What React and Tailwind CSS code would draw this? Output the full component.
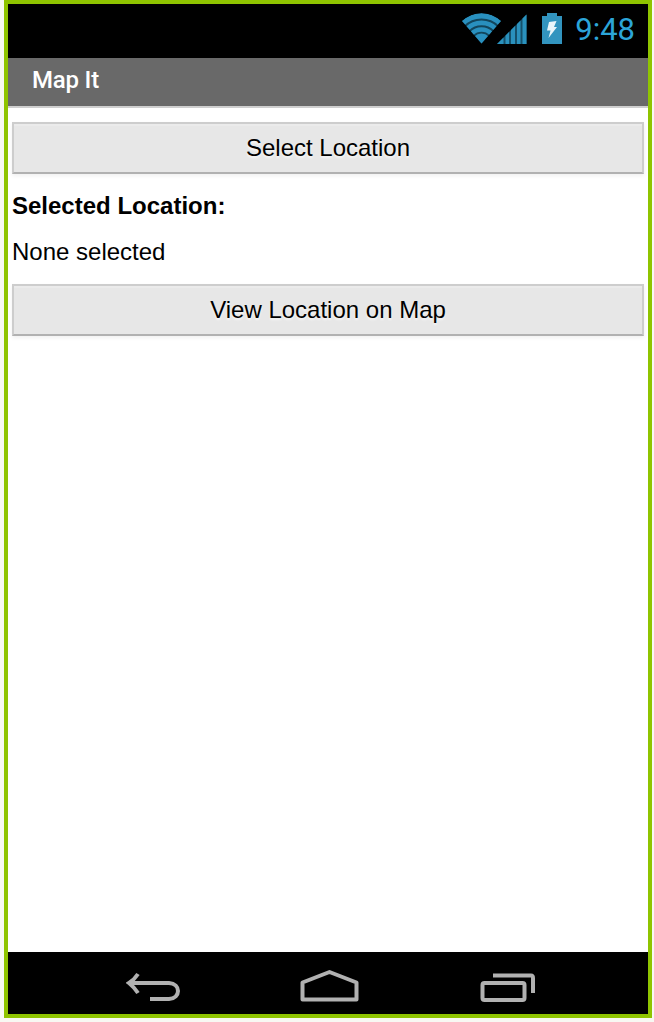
function WifiIcon() {
  return (
    <svg width="40" height="32" viewBox="0 0 40 32" fill="none">
      <defs>
        <clipPath id="fan">
          <path d="M19.5 31.5 L0 9 Q19.5 -7 39 9 Z" />
        </clipPath>
      </defs>
      <g clipPath="url(#fan)" stroke="#2990bf">
        <circle cx="19.5" cy="31.5" r="30" fill="#12455c" stroke="none" />
        <circle cx="19.5" cy="31.5" r="27.6" strokeWidth="5.4" />
        <circle cx="19.5" cy="31.5" r="20.6" strokeWidth="4.8" />
        <circle cx="19.5" cy="31.5" r="14" strokeWidth="4.4" />
        <circle cx="19.5" cy="31.5" r="5" strokeWidth="10" />
      </g>
    </svg>
  );
}

function SignalIcon() {
  return (
    <svg width="30" height="30" viewBox="0 0 30 30">
      <path d="M0 30 L29.5 0.5 V30 Z" fill="#15506b" />
      <path d="M0 30 L6.5 23.5 V30Z M8.5 21.5 L12 18 V30 H8.5Z M14 16 L18 12 V30 H14Z M20 10 L23.5 6.5 V30 H20Z M25.5 4.5 L29.5 0.5 V30 H25.5Z" fill="#2a91bd" />
    </svg>
  );
}

function BatteryIcon() {
  return (
    <svg width="20" height="31" viewBox="0 0 20 31">
      <path d="M5 0 H15 V3 H20 V31 H0 V3 H5 Z" fill="#3294bf" />
      <path d="M7 9 L14.5 8 L12 14 H15 L6.5 25 L8.5 17.5 H5 Z" fill="#e9f5fa" />
    </svg>
  );
}

function Button({ children }) {
  return (
    <button className="flex h-[52px] w-full items-center justify-center border-2 border-[#cdcdcd] border-b-[#b1b1b1] bg-[#e7e7e7] text-2xl leading-none text-black shadow-[inset_0_2px_0_#ebebeb,0_2px_4px_rgba(0,0,0,0.06)] [text-shadow:0_2px_2px_#f6f6f6]">
      {children}
    </button>
  );
}

export default function App() {
  return (
    <div className="h-[1022px] w-[654px] bg-[#f8f8f3] pl-1 font-['Liberation_Sans',Arial,sans-serif] text-black">
      <div className="flex h-[1018px] w-[648px] flex-col border-4 border-[#8fc400] bg-white">
        <div className="flex h-[54px] shrink-0 justify-end bg-black pr-[13px]">
          <div className="mt-2 mr-[-5px]"><WifiIcon /></div>
          <div className="mt-[10px] mr-[15px]"><SignalIcon /></div>
          <div className="mt-[9px] mr-[13px]"><BatteryIcon /></div>
          <span className="mt-[10px] font-['Roboto',sans-serif] text-[31px] leading-8 text-[#2ca5d8]">9:48</span>
        </div>
        <header className="h-[50px] shrink-0 border-b-2 border-[#cfcfcf] bg-[#696969] pl-6">
          <h1 className="pt-[6px] font-['Roboto',sans-serif] text-2xl font-medium leading-8 tracking-[-0.2px] text-white">Map It</h1>
        </header>
        <main className="flex-1 px-1 pt-[14px]">
          <Button>Select Location</Button>
          <h2 className="mt-4 text-2xl font-bold leading-8">Selected Location:</h2>
          <p className="mt-[14px] mb-4 text-2xl leading-8">None selected</p>
          <Button>View Location on Map</Button>
        </main>
        <nav className="flex h-[62px] shrink-0 bg-black text-[#b1b1b1]">
          <svg className="mt-5 ml-[118px]" width="56" height="32" viewBox="0 0 56 32" fill="none" stroke="currentColor" strokeWidth="4">
            <path d="M12 2 Q8 8 3 11 Q8 15 12 21" />
            <path d="M4 11 H43 C55 12 55 26 43 27 H24" />
          </svg>
          <svg className="mt-4 ml-[118px]" width="60" height="36" viewBox="0 0 60 36" fill="none" stroke="currentColor" strokeWidth="4" strokeLinejoin="round">
            <path d="M2.5 31.5 V14.5 L29.5 4 L56.5 14.5 V31.5 Z" />
          </svg>
          <svg className="mt-5 ml-[120px]" width="58" height="32" viewBox="0 0 58 32" fill="none" stroke="currentColor" strokeWidth="4">
            <rect x="2.5" y="11" width="42" height="17" rx="2" />
            <path d="M13 3.5 H51 Q53 3.5 53 6 V21" />
          </svg>
        </nav>
      </div>
    </div>
  );
}
